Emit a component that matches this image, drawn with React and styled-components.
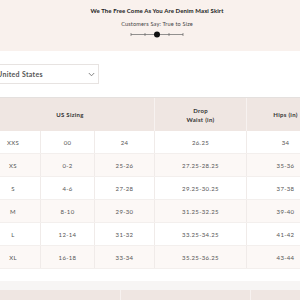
import React from 'react'
import styled, { createGlobalStyle } from 'styled-components'

const GlobalStyle = createGlobalStyle`
  html, body {
    margin: 0;
    padding: 0;
    overflow: hidden;
    background: #ffffff;
  }

  body {
    font-family: Lato, 'Liberation Sans', sans-serif;
    color: #333333;
  }
`

const Page = styled.div`
  width: 342px;
  margin-left: -14px;
`

const Banner = styled.div`
  height: 51px;
  background: #f9f1ed;
  display: flex;
  flex-direction: column;
  align-items: center;
  padding-top: 7px;
  box-sizing: border-box;
`

const Title = styled.div`
  font-size: 6px;
  font-weight: 700;
  line-height: 8px;
  letter-spacing: 0.1px;
  color: #222222;
`

const Subtitle = styled.div`
  margin-top: 5px;
  font-size: 5.6px;
  line-height: 8px;
  letter-spacing: 0.15px;
  color: #444444;
`

const Slider = styled.svg`
  margin-top: 3px;
`

const Controls = styled.div`
  padding: 13px 0 13px;
`

const SelectBox = styled.div`
  width: 113px;
  height: 20px;
  box-sizing: border-box;
  border: 1px solid #e7e3e1;
  display: flex;
  align-items: center;
  justify-content: space-between;
  padding: 0 3px 0 10px;
  font-size: 7px;
  font-weight: 700;
  letter-spacing: 0.3px;
  color: #555555;
`

const Table = styled.div`
  width: 338px;
  border-top: 1px solid #e4e0de;
`

const HeadRow = styled.div`
  display: grid;
  grid-template-columns: ${(p) => p.$cols};
  height: ${(p) => p.$height}px;
  background: #efe6e2;
`

const HeadCell = styled.div`
  display: flex;
  flex-direction: column;
  align-items: center;
  justify-content: center;
  font-size: 6px;
  font-weight: 700;
  line-height: 9px;
  letter-spacing: 0.3px;
  color: #333333;
  border-left: ${(p) => (p.$divider ? '1px solid #f7f2f0' : 'none')};
`

const Row = styled.div`
  display: grid;
  grid-template-columns: 54px 54px 60px 92px 78px;
  height: 23px;
  box-sizing: border-box;
  border-bottom: 1px solid #f3efed;
  background: ${(p) => (p.$shaded ? '#fcf8f6' : '#ffffff')};
`

const Cell = styled.div`
  display: flex;
  align-items: center;
  justify-content: center;
  font-size: 6px;
  letter-spacing: 0.35px;
  color: #555555;
  border-left: ${(p) => (p.$first ? 'none' : '1px solid #f0ebe9')};
`

const Spacer = styled.div`
  height: 12px;
`

const Footer = styled.div`
  height: 9px;
  background: #f7f5f4;
`

const rows = [
  ['XXS', '00', '24', '26.25', '34'],
  ['XS', '0-2', '25-26', '27.25-28.25', '35-36'],
  ['S', '4-6', '27-28', '29.25-30.25', '37-38'],
  ['M', '8-10', '29-30', '31.25-32.25', '39-40'],
  ['L', '12-14', '31-32', '33.25-34.25', '41-42'],
  ['XL', '16-18', '33-34', '35.25-36.25', '43-44']
]

const Chevron = () => (
  <svg width='7' height='5' viewBox='0 0 7 5'>
    <path d='M0.8 1 L3.5 3.8 L6.2 1' fill='none' stroke='#666' strokeWidth='0.8' />
  </svg>
)

const App = () => (
  <Page>
    <GlobalStyle />
    <Banner>
      <Title>We The Free Come As You Are Denim Maxi Skirt</Title>
      <Subtitle>Customers Say: True to Size</Subtitle>
      <Slider width='54' height='7' viewBox='0 0 54 7'>
        <line x1='1' y1='3.5' x2='53' y2='3.5' stroke='#666' strokeWidth='0.7' />
        {[1, 15, 39, 53].map((x) => (
          <line key={x} x1={x} y1='2' x2={x} y2='5' stroke='#666' strokeWidth='0.7' />
        ))}
        <circle cx='27' cy='3.5' r='3' fill='#111' />
      </Slider>
    </Banner>

    <Controls>
      <SelectBox>
        <span>United States</span>
        <Chevron />
      </SelectBox>
    </Controls>

    <Table>
      <HeadRow $cols='168px 92px 78px' $height={33}>
        <HeadCell>US Sizing</HeadCell>
        <HeadCell $divider>
          <span>Drop</span>
          <span>Waist (in)</span>
        </HeadCell>
        <HeadCell $divider>Hips (in)</HeadCell>
      </HeadRow>
      {rows.map((r, i) => (
        <Row key={r[0]} $shaded={i % 2 === 1}>
          {r.map((v, j) => (
            <Cell key={j} $first={j === 0}>{v}</Cell>
          ))}
        </Row>
      ))}
    </Table>

    <Spacer />
    <Footer />
    <HeadRow $cols='134px 130px 78px' $height={20}>
      <HeadCell />
      <HeadCell $divider />
      <HeadCell $divider />
    </HeadRow>
  </Page>
)

export default App
